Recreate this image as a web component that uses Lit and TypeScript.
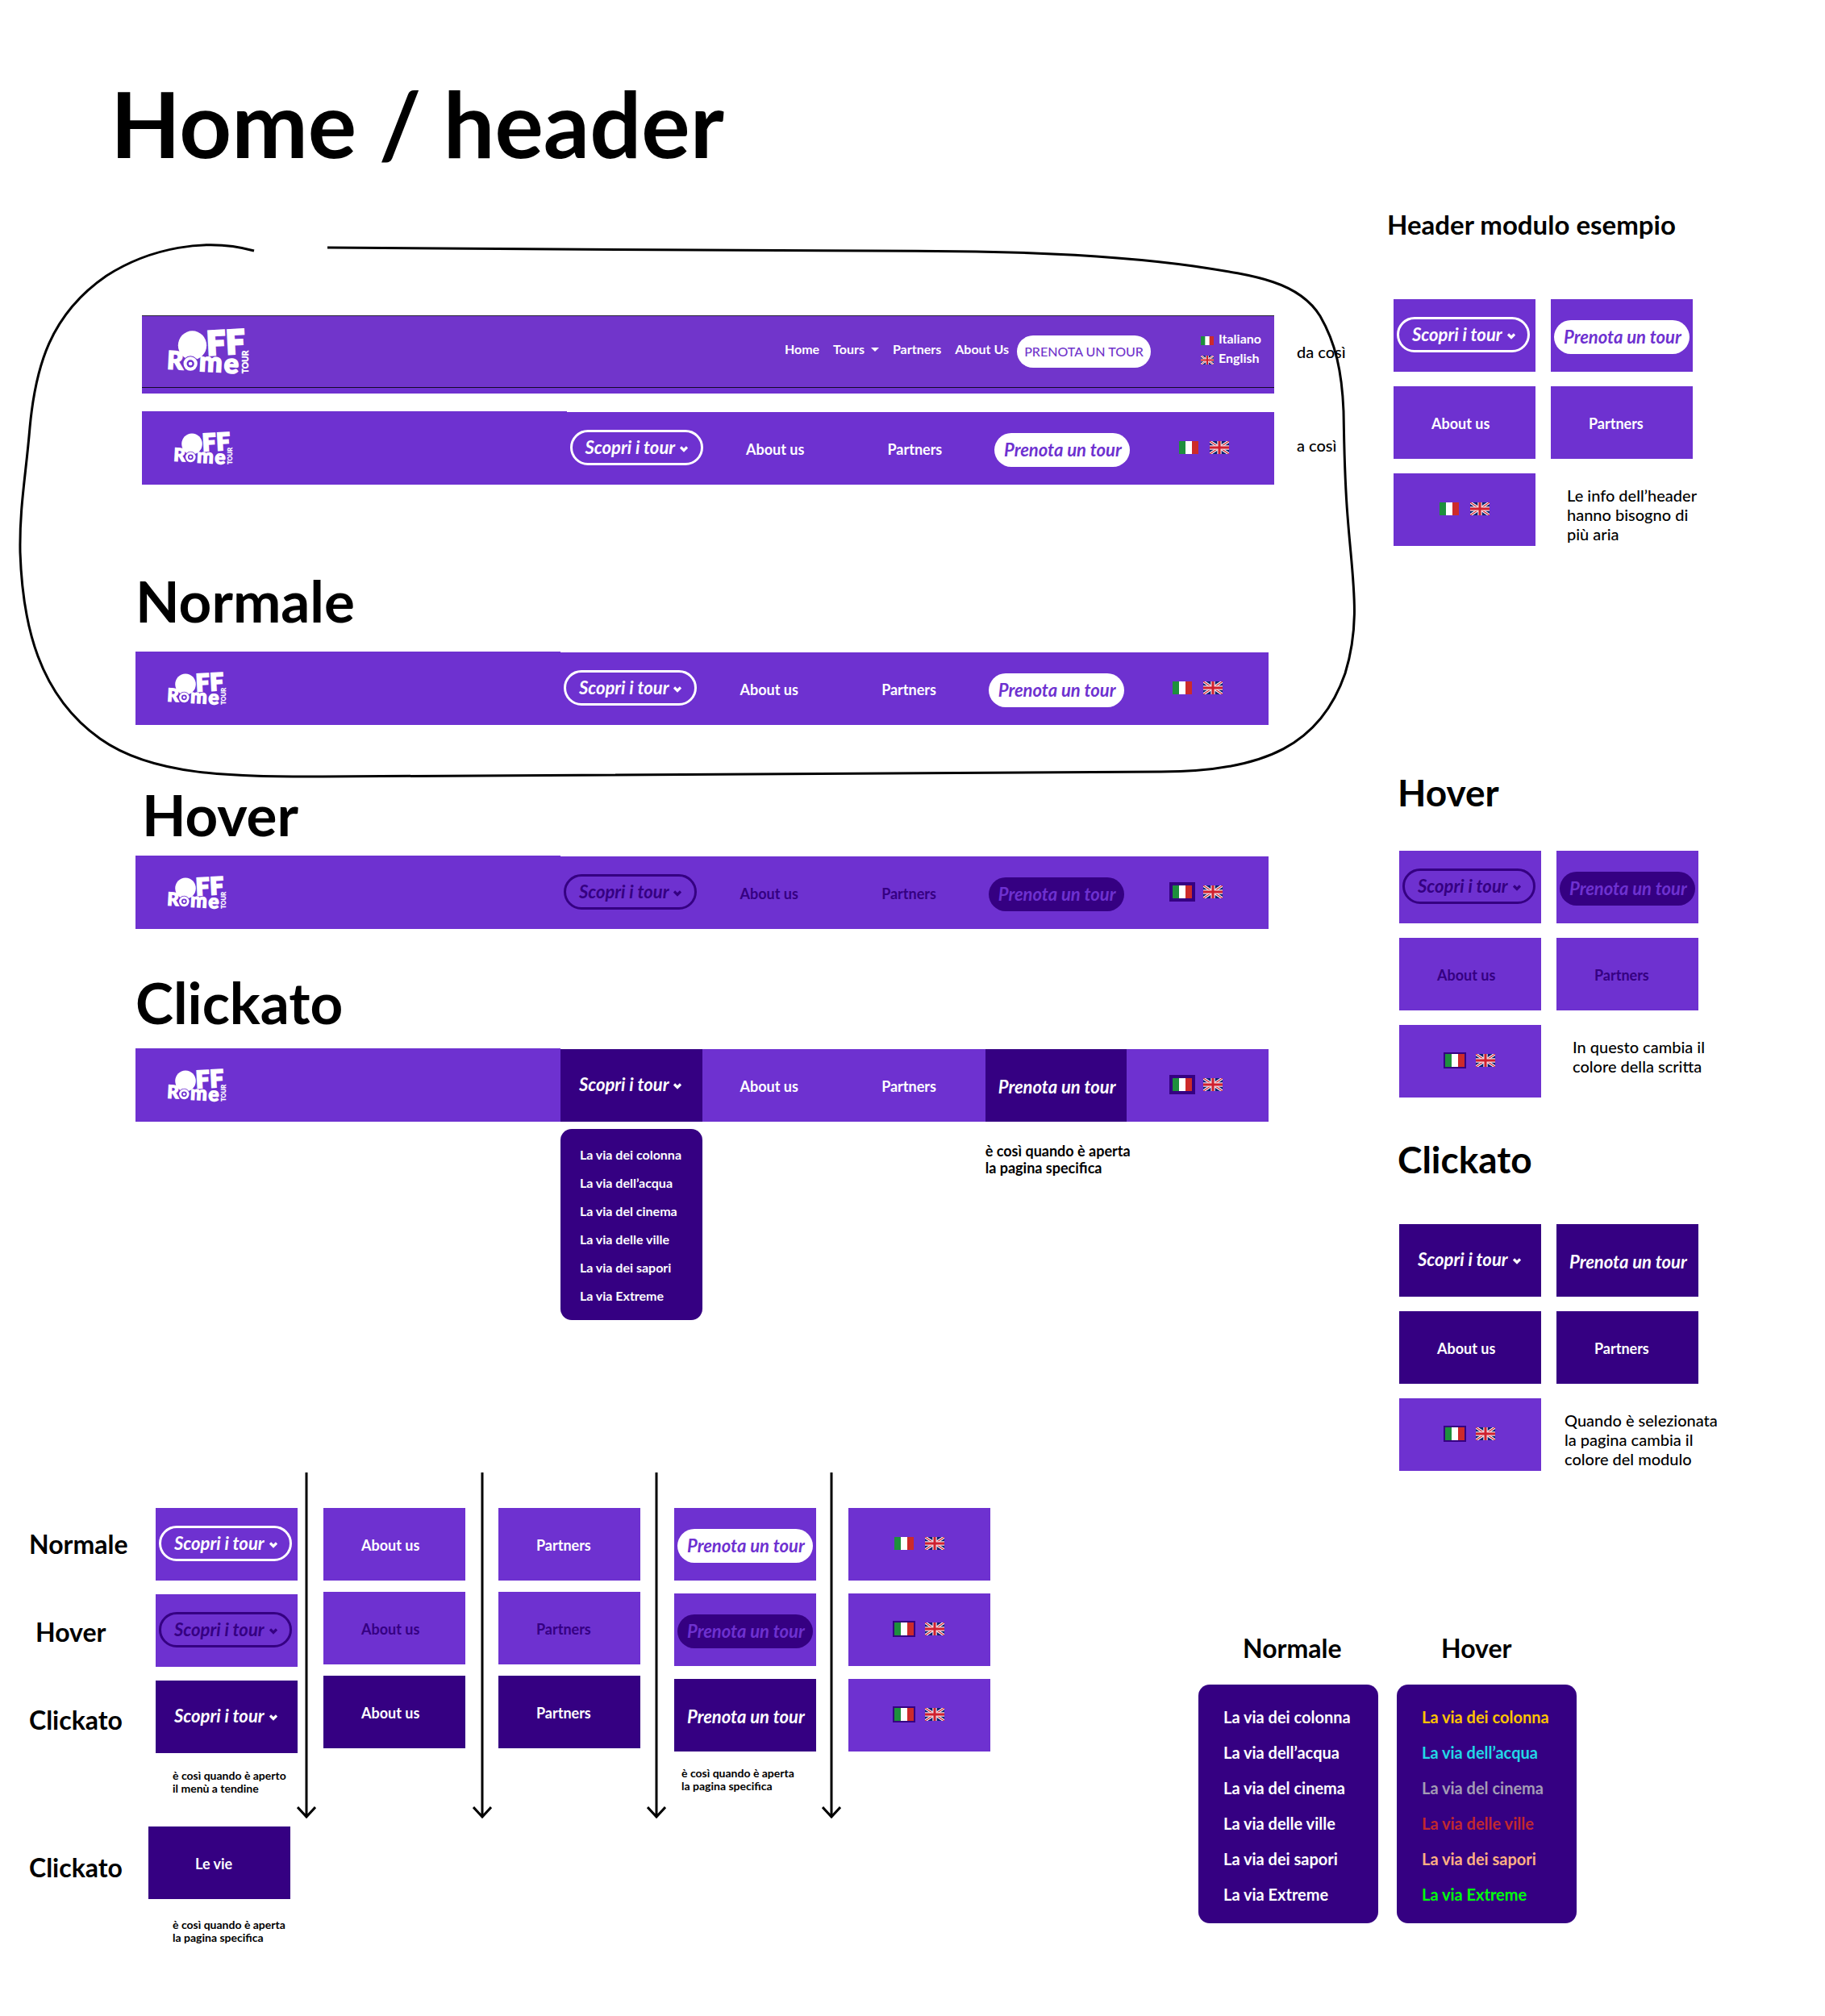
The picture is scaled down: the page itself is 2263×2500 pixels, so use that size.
import { LitElement, html, svg, css, nothing, TemplateResult } from "lit";
import { customElement, property } from "lit/decorators.js";
import { classMap } from "lit/directives/class-map.js";

type State = "normal" | "hover" | "clicked";
type Kind = "tours" | "about" | "partners" | "book" | "langs" | "ways";

const ROUTES: { name: string; tone: string }[] = [
  { name: "La via dei colonna", tone: "gold" },
  { name: "La via dell’acqua", tone: "cyan" },
  { name: "La via del cinema", tone: "gray" },
  { name: "La via delle ville", tone: "red" },
  { name: "La via dei sapori", tone: "peach" },
  { name: "La via Extreme", tone: "green" },
];

const italy = html`<svg class="flag" viewBox="0 0 24 16" preserveAspectRatio="none" aria-hidden="true">
  <rect width="24" height="16" fill="#fff" />
  <rect width="8" height="16" fill="#1e8f3d" />
  <rect x="16" width="8" height="16" fill="#cd2a2a" />
</svg>`;

const britain = html`<svg class="flag" viewBox="0 0 24 16" preserveAspectRatio="none" aria-hidden="true">
  <rect width="24" height="16" fill="#0a2472" />
  <path d="M0 0L24 16M24 0L0 16" stroke="#fff" stroke-width="3.4" />
  <path d="M0 0L24 16M24 0L0 16" stroke="#d0202e" stroke-width="1.2" />
  <path d="M12 0V16M0 8H24" stroke="#f3d9e0" stroke-width="5.4" />
  <path d="M12 0V16M0 8H24" stroke="#d0202e" stroke-width="3" />
</svg>`;

/** Off Rome Tour wordmark. */
@customElement("brand-logo")
class BrandLogo extends LitElement {
  static styles = css`
    :host { display: block; }
    svg { display: block; width: 100%; height: 100%; overflow: visible; }
    text { font-family: Lato, "Open Sans", sans-serif; font-weight: 900; fill: #fff; stroke: #fff; }
    .big { font-size: 120px; stroke-width: 10px; }
    .capital { font-size: 92px; stroke-width: 5px; }
    .mid { font-size: 102px; stroke-width: 5px; }
    .small { font-size: 31px; stroke-width: 1px; }
    .white { fill: #fff; }
    .base { fill: #6e31d0; }
  `;
  render() {
    return html`<svg viewBox="24 28 302 174" role="img" aria-label="Off Rome Tour">
      <text class="capital" transform="translate(20 179) rotate(3)">R</text>
      <text class="mid" transform="translate(139 187) rotate(3)">m</text>
      <text class="mid" transform="translate(231 194) rotate(3)">e</text>
      <ellipse class="white" cx="115" cy="92" rx="53" ry="54" />
      <circle class="base" cx="108" cy="160" r="29" />
      <circle class="white" cx="108" cy="160" r="26" />
      <circle class="base" cx="108" cy="160" r="14" />
      <circle class="white" cx="108" cy="160" r="7" />
      <text class="big" transform="translate(171 128) rotate(-3)">F</text>
      <text class="big" transform="translate(243 124) rotate(-3)">F</text>
      <text class="small" transform="translate(323 197) rotate(-90)">TOUR</text>
    </svg>`;
  }
}

/** One 176 by 90 cell of the header navigation, drawn in one of its states. */
@customElement("nav-module")
class NavModule extends LitElement {
  @property() kind: Kind = "about";
  @property() state: State = "normal";
  @property({ type: Boolean, reflect: true }) bar = false;

  static styles = css`
    :host { display: block; width: 176px; }
    :host([bar]) { width: auto; }
    .cell {
      box-sizing: border-box; height: 90px; display: flex; align-items: center;
      background: #6e31d0; color: #fff;
      font: 700 18px/22px Lato, "Open Sans", sans-serif;
    }
    .hover { color: #350082; }
    .clicked { background: #350082; }
    .langs.clicked { background: #6e31d0; }
    .about, .partners { padding: 2px 0 0 47px; }
    .ways { padding: 2px 0 0 58px; }
    .tours, .book { align-items: flex-start; }
    .tours { padding: 22px 0 0 4px; }
    .book { padding: 26px 0 0 4px; }
    .langs { align-items: flex-start; padding: 36px 0 0 57px; gap: 14px; }
    a { color: inherit; text-decoration: none; }
    button { appearance: none; background: none; border: 0; padding: 0; margin: 0; color: inherit; font: inherit; cursor: pointer; }
    .pill {
      box-sizing: border-box; flex: none; display: flex; align-items: center; white-space: nowrap;
      border-radius: 22px; font-size: 22px; font-style: italic;
    }
    .tours .pill { width: 165px; height: 44px; gap: 6px; padding-left: 16px; border: 3px solid currentColor; }
    .tours.clicked .pill { border-color: transparent; }
    .book .pill { width: 168px; height: 42px; padding-left: 12px; background: #fff; color: #6e31d0; }
    .book.hover .pill { background: #350082; }
    .book.clicked .pill { background: none; color: #fff; }
    .chevron { width: 10px; height: 8px; margin-top: 4px; }
    .lang { display: block; width: 24px; height: 16px; }
    .flag { display: block; width: 24px; height: 16px; }
    .lang.active { box-shadow: 0 0 0 2px #350082; }
    :host([bar]) .lang.active { box-shadow: 0 0 0 4px #350082; }
  `;

  private content(): TemplateResult {
    switch (this.kind) {
      case "tours":
        return html`<button class="pill" type="button">Scopri i tour
          <svg class="chevron" viewBox="0 0 10 8" aria-hidden="true">
            <path d="M1 1.5L5 5.5L9 1.5" fill="none" stroke="currentColor" stroke-width="3.2" />
          </svg></button>`;
      case "book":
        return html`<a class="pill" href="#prenota">Prenota un tour</a>`;
      case "langs":
        return html`<button type="button" aria-label="Italiano"
            class=${classMap({ lang: true, active: this.state !== "normal" })}>${italy}</button>
          <button type="button" class="lang" aria-label="English">${britain}</button>`;
      case "partners":
        return html`<a href="#partners">Partners</a>`;
      case "ways":
        return html`<a href="#vie">Le vie</a>`;
      default:
        return html`<a href="#about">About us</a>`;
    }
  }

  render() {
    return html`<div class=${classMap({ cell: true, [this.kind]: true, [this.state]: true })}>${this.content()}</div>`;
  }
}

/** Full width header: logo area followed by five modules. */
@customElement("site-header")
class SiteHeader extends LitElement {
  @property() state: State = "normal";
  @property({ type: Boolean }) opened = false;

  static styles = css`
    :host { display: block; }
    .bar { display: grid; grid-template-columns: 3fr repeat(5, minmax(0, 1fr)); align-items: end; }
    .home { box-sizing: border-box; height: 91px; background: #6e31d0; padding: 25px 0 0 40px; }
    brand-logo { width: 73px; height: 42px; }
  `;

  render() {
    const cells: Kind[] = ["tours", "about", "partners", "book", "langs"];
    const stateOf = (k: Kind): State =>
      !this.opened ? this.state : k === "about" || k === "partners" ? "normal" : "clicked";
    return html`<header class="bar">
      <div class="home"><brand-logo></brand-logo></div>
      ${cells.map((k) => html`<nav-module bar .kind=${k} .state=${stateOf(k)}></nav-module>`)}
    </header>`;
  }
}

/** Dropdown with the list of routes. */
@customElement("route-menu")
class RouteMenu extends LitElement {
  @property({ type: Boolean }) colored = false;
  @property({ type: Boolean, reflect: true }) compact = false;

  static styles = css`
    :host { display: block; width: 223px; }
    :host([compact]) { width: auto; }
    ul {
      margin: 0; padding: 18px 0 14px 31px; list-style: none; background: #350082; border-radius: 14px;
      font: 700 20px/44px Lato, "Open Sans", sans-serif; white-space: nowrap;
    }
    :host([compact]) ul { padding: 14px 0 13px 24px; font-size: 16px; line-height: 35px; }
    a { color: #fff; text-decoration: none; }
    .gold { color: #ffc400; }
    .cyan { color: #22d8e6; }
    .gray { color: #a39cb4; }
    .red { color: #c0282f; }
    .peach { color: #ffb083; }
    .green { color: #00ff0a; }
  `;

  render() {
    return html`<ul>
      ${ROUTES.map((r) => html`<li><a class=${this.colored ? r.tone : nothing} href="#vie">${r.name}</a></li>`)}
    </ul>`;
  }
}

@customElement("app-root")
class AppRoot extends LitElement {
  static styles = css`
    :host { display: block; background: #fff; color: #000; font: 700 20px/24px Lato, "Open Sans", sans-serif; }
    h1, h2, h3, p { margin: 0; font-weight: 700; }
    a { color: inherit; text-decoration: none; }

    .top { display: grid; grid-template-columns: minmax(0, 1fr) 543px; }
    .main { position: relative; padding: 85px 0 0; }
    .loop { position: absolute; top: 0; left: 0; width: 100%; height: 1000px; pointer-events: none; }
    h1 { font-size: 113px; line-height: 134px; padding-left: 137px; }
    h2 { font-size: 71px; line-height: 84px; }
    h3 { font-size: 32px; line-height: 38px; }
    .indent { padding-left: 8px; }

    .compare {
      display: grid; grid-template-columns: minmax(0, 1fr) 84px; column-gap: 28px; row-gap: 22px; align-items: center;
      padding: 172px 28px 0 176px;
    }
    .remark { font-weight: 500; padding-bottom: 8px; }

    .old { background: #6e31d0; height: 97px; }
    .old-bar {
      box-sizing: border-box; height: 90px; display: flex; align-items: center; padding: 0 16px 0 32px;
      background: #7135cb; color: #fff; font-size: 16px; line-height: 24px;
      border-top: 1px solid #2a2438; border-bottom: 1px solid #140828;
    }
    .old-logo { width: 101px; height: 58px; }
    .old-nav { display: flex; gap: 17px; margin-left: auto; padding-bottom: 6px; }
    .caret { display: inline-block; margin-left: 8px; vertical-align: 3px; border: 5px solid transparent; border-top-color: #fff; border-bottom: 0; }
    .old-book {
      box-sizing: border-box; width: 166px; height: 40px; border-radius: 20px; margin: 0 62px 0 10px;
      display: flex; align-items: center; justify-content: center;
      background: #fff; color: #7135cb; font-weight: 500;
    }
    .old-langs { display: flex; flex-direction: column; padding-bottom: 8px; }
    .old-langs a { display: flex; align-items: center; gap: 6px; }
    .old-langs .flag { width: 16px; height: 11px; margin-top: 4px; }

    .states { padding: 102px 147px 0 168px; }
    .states section:nth-child(1) site-header { margin-top: 21px; }
    .states section:nth-child(2) { margin-top: 69px; }
    .states section:nth-child(2) site-header { margin-top: 9px; }
    .states section:nth-child(3) { margin-top: 49px; }
    .states section:nth-child(3) site-header { margin-top: 15px; }
    .below { display: grid; grid-template-columns: 3fr repeat(5, minmax(0, 1fr)); margin-top: 9px; }
    .below route-menu { grid-column: 2; }
    .below p { grid-column: 5; padding-top: 17px; font-size: 18px; line-height: 21px; white-space: nowrap; }

    .side { padding-top: 258px; }
    .side h3 { padding-left: 13px; font-size: 46px; line-height: 56px; }
    .side section:first-child h3 { padding-left: 0; font-size: 33px; line-height: 40px; }
    .side section:nth-child(2) { margin-top: 278px; }
    .side section:nth-child(3) { margin-top: 49px; }
    .cards { display: grid; grid-template-columns: 176px 1fr; gap: 18px 19px; margin: 44px 0 0 15px; }
    .side section:first-child .cards { margin: 73px 0 0 8px; }
    .side section:last-child .cards { margin-top: 52px; }
    .cards p { padding: 15px 0 0 20px; font-weight: 500; }
    .side section:last-child p { padding-left: 10px; }

    .bottom { display: flex; justify-content: space-between; align-items: flex-start; padding: 2px 308px 72px 36px; }
    .matrix { display: grid; grid-template-columns: 157px 176px 22px 186px 41px 176px 40px 178px 38px 178px; }
    .labels, .column { display: flex; flex-direction: column; gap: 16px; padding-top: 44px; }
    .column { align-items: flex-end; }
    .column:nth-child(2) { gap: 17px; }
    .labels { gap: 19px; }
    .labels h3 { display: flex; align-items: center; height: 90px; }
    .tight { gap: 14px; }
    .caption { font-size: 14px; line-height: 16px; white-space: nowrap; }
    .column .caption { align-self: stretch; padding: 3px 0 0 11px; }
    .column .menu-caption { padding-left: 21px; }
    .arrow { display: block; width: 24px; height: 430px; justify-self: center; }
    .ways { display: flex; margin-top: 9px; }
    .ways h3 { width: 148px; padding-top: 32px; }
    .ways .caption { padding: 24px 0 0 30px; }
    .menus { display: flex; gap: 23px; padding-top: 199px; }
    .menus h3 { padding: 0 0 26px 55px; }
  `;

  private cards(title: string, state: State, note: TemplateResult) {
    const kinds: Kind[] = ["tours", "book", "about", "partners", "langs"];
    return html`<section>
      <h3>${title}</h3>
      <div class="cards">
        ${kinds.map((k) => html`<nav-module .kind=${k} .state=${state}></nav-module>`)}
        <p>${note}</p>
      </div>
    </section>`;
  }

  private column(kind: Kind, caption: TemplateResult | typeof nothing = nothing) {
    const states: State[] = ["normal", "hover", "clicked"];
    return html`<div class=${classMap({ column: true, tight: kind === "about" || kind === "partners" })}>
      ${states.map((s) => html`<nav-module .kind=${kind} .state=${s}></nav-module>`)}
      ${caption}
    </div>`;
  }

  private arrow() {
    return html`<svg class="arrow" viewBox="0 0 24 430" aria-hidden="true">
      ${svg`<path d="M12 0V426M1 415L12 427L23 415" fill="none" stroke="#000" stroke-width="3" />`}
    </svg>`;
  }

  render() {
    return html`
      <div class="top">
        <main class="main">
          <h1>Home / header</h1>
          <div class="compare">
            <div class="old">
              <div class="old-bar">
                <brand-logo class="old-logo"></brand-logo>
                <nav class="old-nav">
                  <a href="#home">Home</a>
                  <a href="#tours">Tours<span class="caret"></span></a>
                  <a href="#partners">Partners</a>
                  <a href="#about">About Us</a>
                </nav>
                <a class="old-book" href="#prenota">PRENOTA UN TOUR</a>
                <div class="old-langs">
                  <a href="#it">${italy} Italiano</a>
                  <a href="#en">${britain} English</a>
                </div>
              </div>
            </div>
            <p class="remark">da così</p>
            <site-header></site-header>
            <p class="remark">a così</p>
          </div>
          <div class="states">
            <section>
              <h2>Normale</h2>
              <site-header></site-header>
            </section>
            <section>
              <h2 class="indent">Hover</h2>
              <site-header state="hover"></site-header>
            </section>
            <section>
              <h2>Clickato</h2>
              <site-header opened></site-header>
              <div class="below">
                <route-menu compact></route-menu>
                <p>è così quando è aperta<br />la pagina specifica</p>
              </div>
            </section>
          </div>
          <svg class="loop" viewBox="0 0 1720 1000" preserveAspectRatio="none" aria-hidden="true">
            <path
              d="M315 311C255 294 185 308 132 342C62 390 44 455 37 530C32 590 24 630 25 685C28 775 48 862 124 916C190 963 290 963 400 963L1440 957C1570 957 1638 922 1668 835C1688 770 1677 720 1671 640C1667 590 1667 560 1666 510C1664 460 1656 425 1637 392C1611 350 1560 342 1480 330C1350 312 1200 311 1080 311C900 310 600 309 406 307"
              fill="none" stroke="#000" stroke-width="3" />
          </svg>
        </main>
        <aside class="side">
          ${this.cards("Header modulo esempio", "normal", html`Le info dell’header<br />hanno bisogno di<br />più aria`)}
          ${this.cards("Hover", "hover", html`In questo cambia il<br />colore della scritta`)}
          ${this.cards("Clickato", "clicked", html`Quando è selezionata<br />la pagina cambia il<br />colore del modulo`)}
        </aside>
      </div>
      <div class="bottom">
        <div>
          <div class="matrix">
            <div class="labels">
              <h3>Normale</h3>
              <h3 class="indent">Hover</h3>
              <h3>Clickato</h3>
            </div>
            ${this.column("tours", html`<p class="caption menu-caption">è così quando è aperto<br />il menù a tendine</p>`)}
            ${this.arrow()} ${this.column("about")} ${this.arrow()} ${this.column("partners")} ${this.arrow()}
            ${this.column("book", html`<p class="caption">è così quando è aperta<br />la pagina specifica</p>`)}
            ${this.arrow()} ${this.column("langs")}
          </div>
          <div class="ways">
            <h3>Clickato</h3>
            <div>
              <nav-module kind="ways" state="clicked"></nav-module>
              <p class="caption">è così quando è aperta<br />la pagina specifica</p>
            </div>
          </div>
        </div>
        <div class="menus">
          <div>
            <h3>Normale</h3>
            <route-menu></route-menu>
          </div>
          <div>
            <h3>Hover</h3>
            <route-menu colored></route-menu>
          </div>
        </div>
      </div>
    `;
  }
}
